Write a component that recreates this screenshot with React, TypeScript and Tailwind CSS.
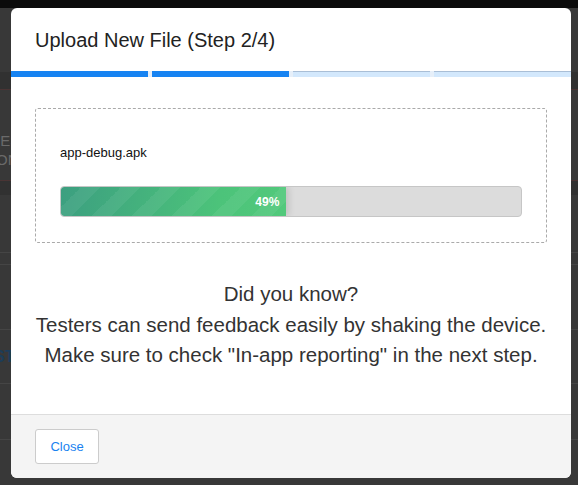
import React from 'react'

const STEPS = 4
const CURRENT_STEP = 2
const PROGRESS = 49

function StepBar() {
  return (
    <div className="flex gap-[4px] h-[6px] bg-[#e6eff9]">
      {Array.from({ length: STEPS }).map((_, i) =>
        i < CURRENT_STEP ? (
          <div key={i} className="flex-1 bg-[#1683f2]" />
        ) : (
          <div key={i} className="flex-1 bg-[#d3e8fc] border-t border-[#a9bed6]" />
        )
      )}
    </div>
  )
}

function PageBehind() {
  // dimmed page under the modal overlay
  return (
    <div className="flex flex-col w-full h-full bg-[#383838]">
      <div className="h-[8px] bg-[#0b0b0b]" />
      <div className="h-[64px]" />
      <div className="h-[18px] bg-[#313131] border-b border-[#4a3434]" />
      <div className="h-[90px] flex flex-col justify-center pt-[30px] text-[#6a6a6a] text-[15px] leading-[19px] font-['Liberation_Sans',sans-serif] -ml-[4px]">
        <span>IES</span>
        <span>ON</span>
      </div>
      <div className="h-[15px] bg-[#313131] border-t border-[#4a3434]" />
      <div className="h-[58px] border-b border-[#454545]" />
      <div className="h-[12px] border-b border-[#454545]" />
      <div className="h-[65px] border-b border-[#454545]" />
      <div className="h-[54px] border-b border-[#454545] flex items-center -ml-[6px] text-[#1c3d5a] font-bold text-[16px] font-['Liberation_Sans',sans-serif]">
        ST
      </div>
      <div className="h-[56px] border-b border-[#454545]" />
      <div className="flex-1" />
    </div>
  )
}

export default function App() {
  return (
    <div className="relative w-[578px] h-[485px] overflow-hidden font-['Liberation_Sans',Arial,sans-serif]">
      <PageBehind />

      <div className="absolute left-[11px] top-[8px] w-[560px] h-[470px] rounded-[6px] bg-white flex flex-col overflow-hidden">
        {/* Header */}
        <div className="h-[63px] px-[24px] flex items-center text-[20px] text-[#222]">
          Upload New File (Step {CURRENT_STEP}/{STEPS})
        </div>
        <StepBar />

        {/* Body */}
        <div className="flex-1 px-[24px] pt-[31px]">
          <div className="border border-dashed border-[#aaaaaa] rounded-[3px] px-[24px] pt-[35px] pb-[25px]">
            <div className="text-[13px] leading-[18px] text-[#111] mb-[24px]">app-debug.apk</div>
            <div className="h-[31px] rounded-[4px] bg-[#dcdcdc] border border-[#c6c6c6] overflow-hidden">
              <div
                className="h-full rounded-l-[3px] flex items-center justify-end pr-[7px] text-white text-[12px] font-bold shadow-[3px_0_6px_rgba(0,0,0,0.12)] bg-[linear-gradient(-45deg,rgba(255,255,255,0.06)_25%,transparent_25%,transparent_50%,rgba(255,255,255,0.06)_50%,rgba(255,255,255,0.06)_75%,transparent_75%,transparent),linear-gradient(100deg,#3c9f80,#4cc37a_70%,#52c97b)] bg-[length:40px_40px,100%_100%]"
                style={{ width: `${PROGRESS}%` }}
              >
                {PROGRESS}%
              </div>
            </div>
          </div>

          <div className="mt-[36px] text-center text-[20.5px] leading-[30.5px] text-[#333]">
            <div>Did you know?</div>
            <div>Testers can send feedback easily by shaking the device.</div>
            <div>Make sure to check "In-app reporting" in the next step.</div>
          </div>
        </div>

        {/* Footer */}
        <div className="h-[64px] border-t border-[#dddddd] bg-[#f4f4f4] px-[24px] flex items-center">
          <button className="w-[64px] h-[35px] bg-white border border-[#cccccc] rounded-[3px] text-[#1a82f0] text-[13px]">
            Close
          </button>
        </div>
      </div>
    </div>
  )
}
